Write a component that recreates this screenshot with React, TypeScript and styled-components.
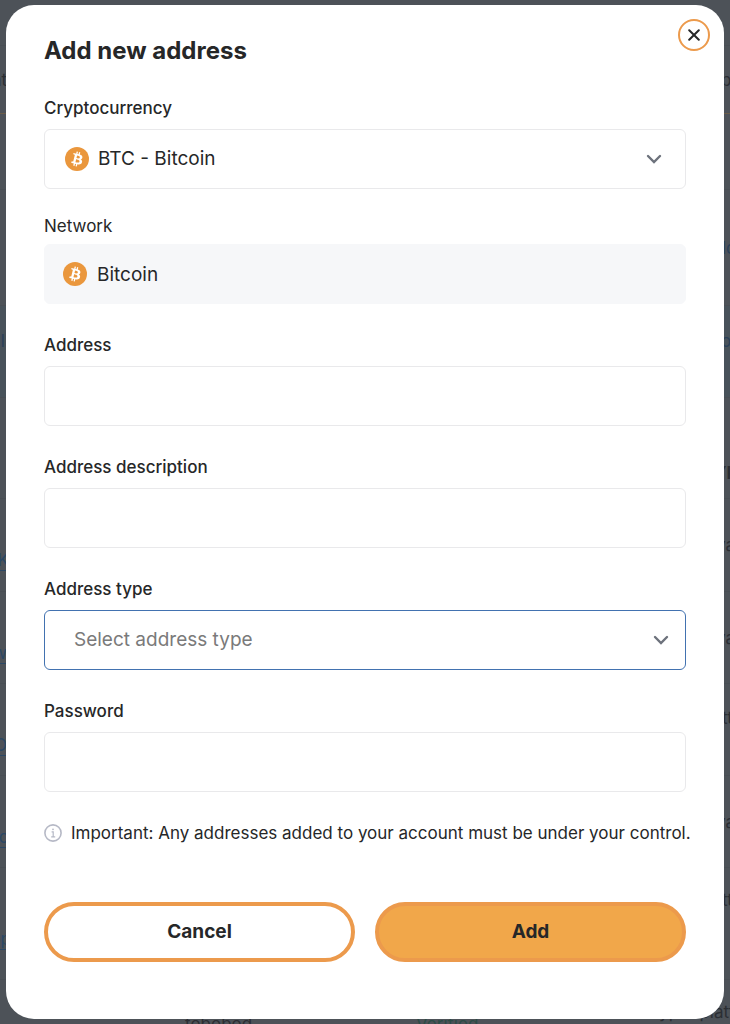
import React from "react";
import styled, { createGlobalStyle, css } from "styled-components";

const GlobalStyle = createGlobalStyle`
  *, *::before, *::after { box-sizing: border-box; }
  body {
    margin: 0;
    background: #4d5258;
    color: #262728;
    font-family: Inter, "Liberation Sans", sans-serif;
  }
  button, input, select { font: inherit; color: inherit; }
`;

const Screen = styled.div`
  position: relative;
  min-height: 100vh;
  padding: 5px 6px;
  overflow: hidden;
`;

const Backdrop = styled.div`
  position: absolute;
  inset: 0;
  overflow: hidden;
  font-size: 17px;
  line-height: 24px;
  color: #2b2e33;
  white-space: nowrap;
`;

const BackRow = styled.div<{ $height: number; $tint?: boolean; $accent?: boolean }>`
  display: flex;
  justify-content: space-between;
  height: ${(p) => p.$height}px;
  border-bottom: 1px solid ${(p) => (p.$accent ? "#6b5c48" : "#494e54")};
  background: ${(p) => (p.$tint ? "#48525a" : "transparent")};
`;

type Tone = "link" | "blue" | "bold";

const BackCell = styled.span<{ $end?: boolean; $width: number; $above?: number; $below?: number; $tone?: Tone }>`
  display: flex;
  align-items: center;
  width: ${(p) => p.$width}px;
  padding-top: ${(p) => p.$above ?? 0}px;
  padding-bottom: ${(p) => p.$below ?? 0}px;
  justify-content: ${(p) => (p.$end ? "flex-end" : "flex-start")};
  ${(p) => p.$tone === "link" && css`color: #2b4865; text-decoration: underline; text-underline-offset: 4px;`}
  ${(p) => p.$tone === "blue" && css`color: #2b4058;`}
  ${(p) => p.$tone === "bold" && css`font-weight: 700;`}
`;

const BackFooter = styled.div`
  display: grid;
  grid-template-columns: 185fr 231fr 224fr 90fr;
  height: 56px;
  align-items: end;
`;

const Verified = styled.span`
  color: #2c4c46;
`;

const Platform = styled.span`
  padding-bottom: 12px;
  overflow: hidden;
`;

const Dialog = styled.form`
  position: relative;
  display: flex;
  flex-direction: column;
  min-height: calc(100vh - 10px);
  padding: 31px 38px 57px;
  border-radius: 28px;
  background: #fff;
`;

const Title = styled.h1`
  margin: 0 0 32px;
  font-size: 24px;
  line-height: 30px;
  font-weight: 700;
`;

const CloseButton = styled.button`
  position: absolute;
  top: 14px;
  right: 14px;
  display: grid;
  place-items: center;
  width: 32px;
  height: 32px;
  padding: 0;
  border: 2px solid #ec9a4c;
  border-radius: 50%;
  background: #fff;
`;

const Field = styled.div<{ $tight?: boolean }>`
  display: flex;
  flex-direction: column;
  gap: ${(p) => (p.$tight ? 8 : 11)}px;
  margin-bottom: 31px;
`;

const FieldPair = styled.div`
  display: flex;
  flex-direction: column;
  ${Field}:first-child { margin-bottom: 27px; }
`;

const Label = styled.label<{ $light?: boolean }>`
  font-size: 17px;
  line-height: 20px;
  font-weight: ${(p) => (p.$light ? 400 : 500)};
`;

const Shell = styled.div`
  display: grid;
  align-items: center;
  > * { grid-area: 1 / 1; }
`;

const control = css`
  width: 100%;
  height: 60px;
  margin: 0;
  padding: 0 20px;
  border: 1px solid #e9e9eb;
  border-radius: 6px;
  outline: none;
  background: #fff;
  font-size: 19px;
  line-height: 24px;
`;

const TextInput = styled.input`
  ${control}
`;

const ReadOnlyInput = styled.input`
  ${control}
  padding-left: 52px;
  border-color: #f6f7f9;
  background: #f6f7f9;
`;

const Select = styled.select<{ $active?: boolean }>`
  ${control}
  appearance: none;
  padding-left: ${(p) => (p.$active ? 29 : 53)}px;
  ${(p) => p.$active && css`border-color: #4272b0; color: #7a7a7a;`}
`;

const CoinSlot = styled.span<{ $inset: number }>`
  display: flex;
  margin-left: ${(p) => p.$inset}px;
  pointer-events: none;
  z-index: 1;
  justify-self: start;
`;

const ChevronSlot = styled.span<{ $inset: number }>`
  display: flex;
  margin-right: ${(p) => p.$inset}px;
  pointer-events: none;
  z-index: 1;
  justify-self: end;
`;

const Note = styled.p`
  display: flex;
  align-items: center;
  gap: 9px;
  margin: 0 0 59px;
  font-size: 17px;
  line-height: 20px;
  svg { flex: none; }
  @media (min-width: 720px) { white-space: nowrap; }
`;

const Actions = styled.div`
  display: grid;
  grid-template-columns: 1fr 1fr;
  gap: 20px;
`;

const ActionButton = styled.button<{ $primary?: boolean }>`
  height: 60px;
  border: 4px solid #ec9a4c;
  border-radius: 30px;
  background: ${(p) => (p.$primary ? "#f1a74a" : "#fff")};
  font-size: 19px;
  line-height: 24px;
  font-weight: 700;
`;

const BitcoinIcon = () => (
  <svg width="24" height="24" viewBox="0 0 32 32" aria-hidden="true">
    <circle cx="16" cy="16" r="16" fill="#ea973d" />
    <path
      fill="#fff"
      d="M23.189 14.02c.314-2.096-1.283-3.223-3.465-3.975l.708-2.84-1.728-.43-.69 2.765c-.454-.114-.92-.22-1.385-.326l.695-2.783L15.596 6l-.708 2.839c-.376-.086-.746-.17-1.104-.26l.002-.009-2.384-.595-.46 1.846s1.283.294 1.256.312c.7.175.826.638.805 1.006l-.806 3.235c.048.012.11.03.18.057l-.183-.045-1.13 4.532c-.086.212-.303.531-.793.41.018.025-1.256-.313-1.256-.313l-.858 1.978 2.25.561c.418.105.828.215 1.231.318l-.715 2.872 1.727.43.708-2.84c.472.127.93.245 1.378.357l-.706 2.828 1.728.43.715-2.866c2.948.558 5.164.333 6.097-2.333.752-2.146-.037-3.385-1.588-4.192 1.13-.26 1.98-1.003 2.207-2.538zm-3.95 5.538c-.533 2.147-4.148.986-5.32.695l.95-3.805c1.172.293 4.929.872 4.37 3.11zm.535-5.569c-.487 1.953-3.495.96-4.47.717l.86-3.45c.975.243 4.118.696 3.61 2.733z"
    />
  </svg>
);

const Chevron = () => (
  <svg width="16" height="10" viewBox="0 0 16 10" fill="none" stroke="#6d727c" strokeWidth="2.4" aria-hidden="true">
    <path d="M2 2 8 8l6-6" strokeLinecap="round" strokeLinejoin="miter" />
  </svg>
);

const CloseIcon = () => (
  <svg width="12" height="12" viewBox="0 0 12 12" stroke="#262728" strokeWidth="2" strokeLinecap="round" aria-hidden="true">
    <path d="m1.2 1.2 9.6 9.6M10.8 1.2 1.2 10.8" />
  </svg>
);

const InfoIcon = () => (
  <svg width="18" height="18" viewBox="0 0 18 18" fill="none" stroke="#b6b9c6" aria-hidden="true">
    <circle cx="9" cy="9" r="8.1" strokeWidth="1.6" />
    <path d="M7.6 7.8H9.2V12.6M7.2 12.8h4" strokeWidth="1.2" />
    <circle cx="9" cy="5.3" r="0.9" fill="#b6b9c6" stroke="none" />
  </svg>
);

type Cell = { text: string; width: number; tone?: Tone; above?: number; below?: number };
type Row = { height: number; left?: Cell; right?: Cell; tint?: boolean; accent?: boolean };

const rows: Row[] = [
  { height: 46 },
  { height: 68, left: { text: "at", width: 7 }, right: { text: "p", width: 9 }, accent: true },
  { height: 76 },
  { height: 116, right: { text: "ld", width: 8, tone: "blue" } },
  {
    height: 92,
    left: { text: "I", width: 5, tone: "blue", below: 22 },
    right: { text: "o", width: 9, tone: "blue", below: 22 },
    tint: true,
  },
  { height: 101, right: { text: "YP", width: 16, tone: "bold", above: 50 } },
  { height: 93, left: { text: "K", width: 9, tone: "link", above: 30 }, right: { text: "va", width: 14 } },
  { height: 92, left: { text: "w", width: 7, tone: "link", above: 30 }, right: { text: "va", width: 14 } },
  { height: 92, left: { text: "D", width: 7, tone: "link", above: 30 }, right: { text: "tt", width: 8, below: 24 } },
  { height: 92, left: { text: "ro", width: 9, tone: "link", above: 30 }, right: { text: "va", width: 14 } },
  { height: 112, left: { text: "op", width: 11, tone: "link", above: 30 }, right: { text: "tt", width: 8, below: 48 } },
];

export default function App() {
  return (
    <Screen>
      <GlobalStyle />
      <Backdrop aria-hidden="true">
        {rows.map(({ height, left, right, tint, accent }, i) => (
          <BackRow key={i} $height={height} $tint={tint} $accent={accent}>
            <BackCell $end $width={left?.width ?? 0} $tone={left?.tone} $above={left?.above} $below={left?.below}>
              {left?.text}
            </BackCell>
            <BackCell $width={right?.width ?? 0} $tone={right?.tone} $above={right?.above} $below={right?.below}>
              {right?.text}
            </BackCell>
          </BackRow>
        ))}
        <BackFooter>
          <span />
          <span>tobobod</span>
          <Verified>Verified</Verified>
          <Platform>Crypto platform</Platform>
        </BackFooter>
      </Backdrop>
      <Dialog role="dialog" aria-labelledby="dialog-title" onSubmit={(e) => e.preventDefault()}>
        <Title id="dialog-title">Add new address</Title>
        <CloseButton type="button" aria-label="Close">
          <CloseIcon />
        </CloseButton>
        <FieldPair>
          <Field>
            <Label htmlFor="currency">Cryptocurrency</Label>
            <Shell>
              <Select id="currency" defaultValue="btc">
                <option value="btc">BTC - Bitcoin</option>
              </Select>
              <CoinSlot $inset={21}><BitcoinIcon /></CoinSlot>
              <ChevronSlot $inset={24}><Chevron /></ChevronSlot>
            </Shell>
          </Field>
          <Field $tight>
            <Label htmlFor="network" $light>Network</Label>
            <Shell>
              <ReadOnlyInput id="network" readOnly value="Bitcoin" />
              <CoinSlot $inset={19}><BitcoinIcon /></CoinSlot>
            </Shell>
          </Field>
        </FieldPair>
        <Field>
          <Label htmlFor="address">Address</Label>
          <TextInput id="address" type="text" />
        </Field>
        <Field>
          <Label htmlFor="description">Address description</Label>
          <TextInput id="description" type="text" />
        </Field>
        <Field>
          <Label htmlFor="type">Address type</Label>
          <Shell>
            <Select id="type" defaultValue="" $active>
              <option value="">Select address type</option>
            </Select>
            <ChevronSlot $inset={17}><Chevron /></ChevronSlot>
          </Shell>
        </Field>
        <Field>
          <Label htmlFor="password">Password</Label>
          <TextInput id="password" type="password" />
        </Field>
        <Note>
          <InfoIcon />
          Important: Any addresses added to your account must be under your control.
        </Note>
        <Actions>
          <ActionButton type="button">Cancel</ActionButton>
          <ActionButton type="submit" $primary>Add</ActionButton>
        </Actions>
      </Dialog>
    </Screen>
  );
}
